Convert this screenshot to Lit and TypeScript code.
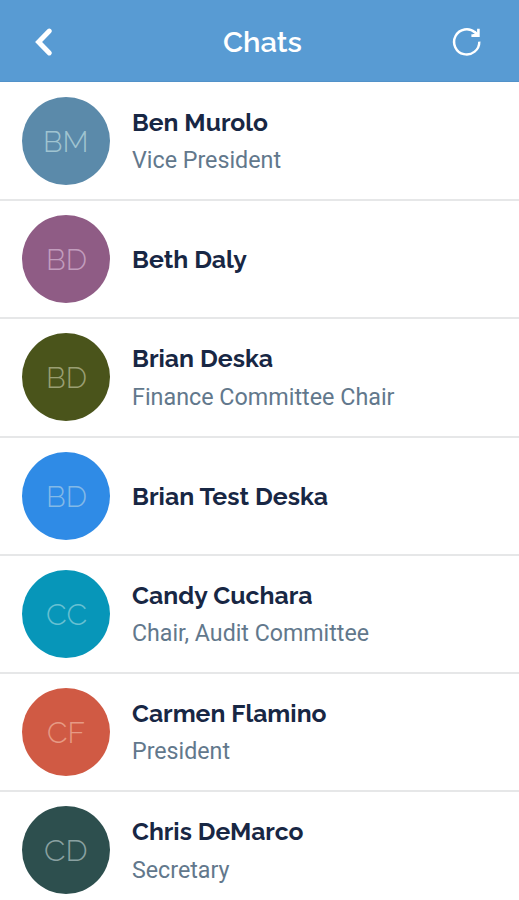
import { LitElement, html, css, svg } from "lit";
import { customElement, property } from "lit/decorators.js";

interface Contact {
  initials: string;
  initialsWidth: number;
  color: string;
  ink: string;
  name: string;
  nameWidth: number;
  role?: string;
  roleWidth?: number;
}

const CONTACTS: Contact[] = [
  { initials: "BM", initialsWidth: 45.5, color: "#5b8aaa", ink: "#a0c4d1", name: "Ben Murolo", nameWidth: 136, role: "Vice President", roleWidth: 149 },
  { initials: "BD", initialsWidth: 41, color: "#8f5c85", ink: "#c29dbd", name: "Beth Daly", nameWidth: 115 },
  { initials: "BD", initialsWidth: 41, color: "#4a541b", ink: "#9a9f74", name: "Brian Deska", nameWidth: 141, role: "Finance Committee Chair", roleWidth: 262.5 },
  { initials: "BD", initialsWidth: 41, color: "#2f8be6", ink: "#83b9e6", name: "Brian Test Deska", nameWidth: 196 },
  { initials: "CC", initialsWidth: 41, color: "#0796b9", ink: "#68c0d2", name: "Candy Cuchara", nameWidth: 180.5, role: "Chair, Audit Committee", roleWidth: 237 },
  { initials: "CF", initialsWidth: 38, color: "#d05a44", ink: "#e69a85", name: "Carmen Flamino", nameWidth: 194.5, role: "President", roleWidth: 98 },
  { initials: "CD", initialsWidth: 43.5, color: "#2d4f4e", ink: "#8aa1a1", name: "Chris DeMarco", nameWidth: 171.5, role: "Secretary", roleWidth: 97.5 },
];

/** One line of text set to an exact width. */
const line = (cls: string, text: string, width: number, height: number, baseline: number) => html`
  <svg class=${cls} width=${width} height=${height}>
    ${svg`<text x="0" y=${baseline} textLength=${width} lengthAdjust="spacingAndGlyphs">${text}</text>`}
  </svg>`;

@customElement("contact-row")
export class ContactRow extends LitElement {
  @property({ attribute: false }) contact!: Contact;

  static styles = css`
    :host {
      display: flex;
      align-items: center;
      gap: 22px;
      box-sizing: border-box;
      height: 118.25px;
      padding-left: 22px;
      border-bottom: 2px solid #e6e7e8;
      background: #fff;
    }
    svg { display: block; overflow: visible; }
    .avatar {
      flex: none;
      display: flex;
      align-items: center;
      justify-content: center;
      width: 88px;
      height: 88px;
      border-radius: 50%;
    }
    .initials { font: 300 29.5px Raleway, Inter, sans-serif; fill: currentColor; }
    .lines { display: flex; flex-direction: column; gap: 8.5px; }
    .name { font: 700 24.3px Raleway, Lato, sans-serif; fill: #182744; }
    .role { font: 400 23px Roboto, sans-serif; fill: #62788c; }
  `;

  render() {
    const c = this.contact;
    return html`
      <div class="avatar" style="background:${c.color};color:${c.ink}">
        ${line("initials", c.initials, c.initialsWidth, 30, 26)}
      </div>
      <div class="lines">
        ${line("name", c.name, c.nameWidth, 30, 23.6)}
        ${c.role ? line("role", c.role, c.roleWidth!, 30, 23) : null}
      </div>
    `;
  }
}

@customElement("app-root")
export class AppRoot extends LitElement {
  static styles = css`
    :host { display: block; height: 900px; overflow: hidden; background: #fff; }
    header {
      display: grid;
      grid-template-columns: 86px 1fr 80px;
      align-items: center;
      box-sizing: border-box;
      height: 82px;
      padding-top: 2px;
      background: #589bd3;
      border-bottom: 1px solid #5292c9;
    }
    svg { display: block; overflow: visible; }
    .back { margin-left: 34px; }
    .refresh { margin-left: 13px; }
    .title {
      justify-self: center;
      font: 600 28.5px Raleway, Lato, sans-serif;
      fill: #fff;
    }
    main { display: flex; flex-direction: column; padding-top: 0.75px; }
    contact-row { flex: none; }
  `;

  render() {
    return html`
      <header>
        <svg class="back" width="20" height="28" viewBox="0 0 20 28" fill="none" stroke="#fff" stroke-width="5" stroke-linecap="round">
          <path d="M15.3 3.1 4.6 14 15.3 24.9" />
        </svg>
        ${line("title", "Chats", 79, 32, 26.3)}
        <svg class="refresh" width="32" height="32" viewBox="0 0 32 32" fill="none" stroke="#fff" stroke-width="2.4">
          <path d="M27.3 15.6A12.6 12.6 0 1 1 23.2 6.6L25 8.3" />
          <path d="M26.4 2.7V9.6H19.4" stroke-width="2.6" />
          <path d="M22.5 5.5 25.8 8.8V9.2H21" />
        </svg>
      </header>
      <main>${CONTACTS.map((c) => html`<contact-row .contact=${c}></contact-row>`)}</main>
    `;
  }
}
